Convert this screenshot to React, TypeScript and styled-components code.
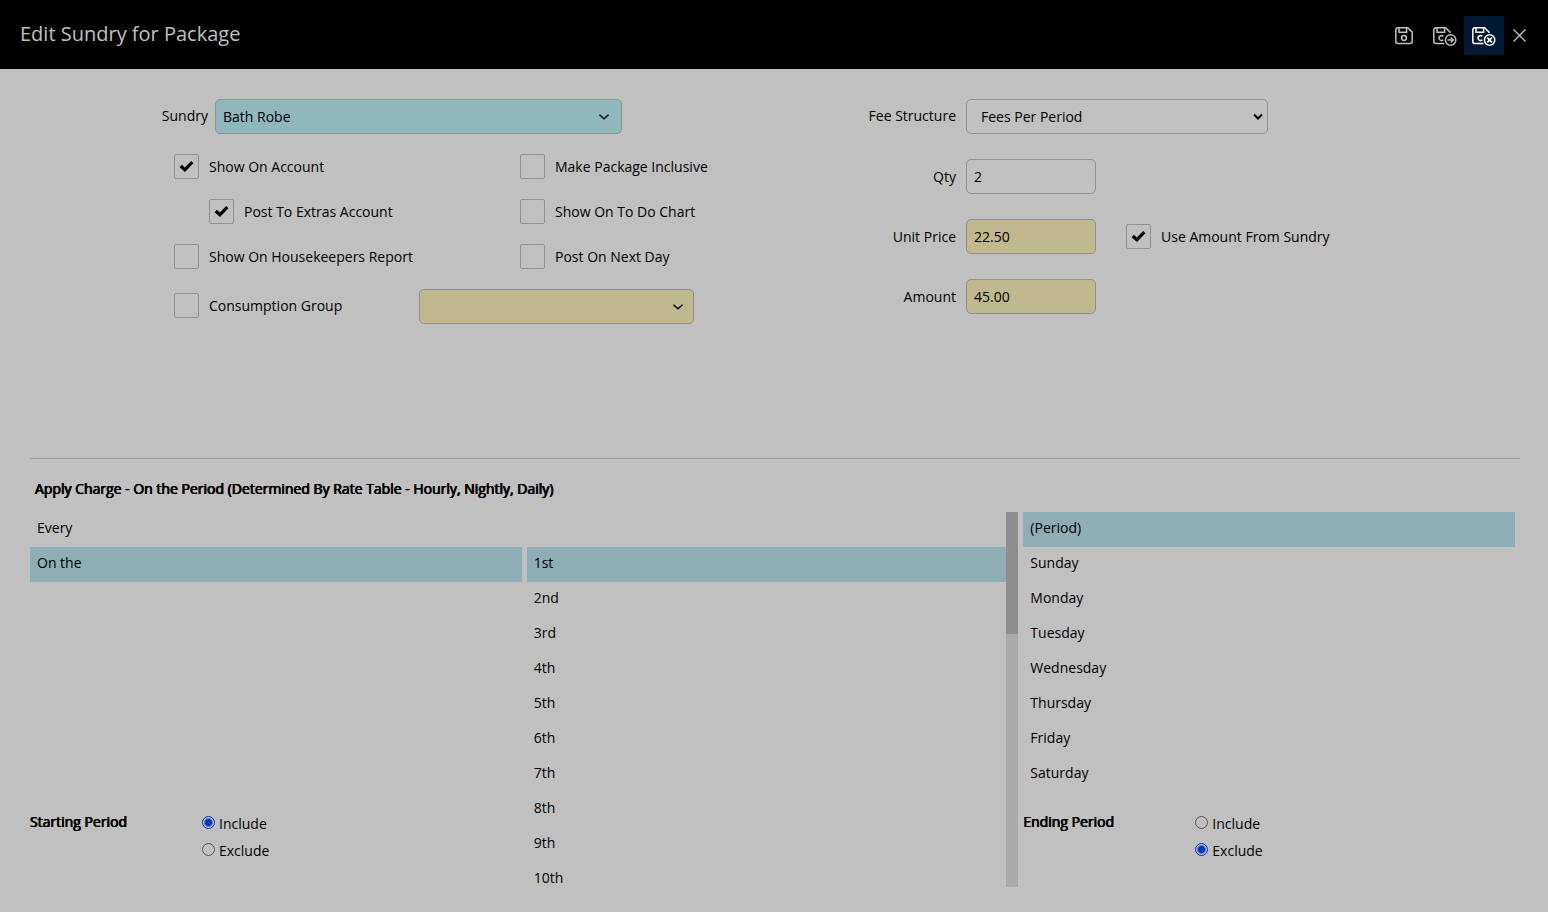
import React, { useState } from 'react';
import styled, { createGlobalStyle, css } from 'styled-components';

const color = {
  page: '#c0c0c0',
  ink: '#000000',
  border: '#909090',
  required: '#90b8bc',
  computed: '#bfb98d',
  selected: '#8eadb5',
  track: '#aaaaaa',
  thumb: '#8e8e8e',
  accent: '#0038c0',
};

const GlobalStyle = createGlobalStyle`
  *, *::before, *::after { box-sizing: border-box; }
  body {
    margin: 0;
    background: ${color.page};
    color: ${color.ink};
    font-family: 'Open Sans', 'Noto Sans', sans-serif;
    font-size: 14px;
    line-height: 20px;
  }
  input, select, button { font: inherit; color: inherit; }
`;

const Header = styled.header`
  display: flex;
  align-items: center;
  justify-content: space-between;
  height: 69px;
  padding: 2px 13px 0 20px;
  background: #000000;
  color: ${color.page};
`;

const Title = styled.h1`
  margin: 0;
  padding-bottom: 4px;
  font-size: 20px;
  font-weight: 400;
  line-height: 28px;
`;

const Toolbar = styled.div`
  display: flex;
`;

const ToolButton = styled.button<{ $active?: boolean; $narrow?: boolean }>`
  display: flex;
  align-items: center;
  justify-content: center;
  width: ${(p) => (p.$narrow ? 31 : 40)}px;
  height: 39px;
  padding: 0;
  border: 0;
  background: ${(p) => (p.$active ? '#001a35' : 'transparent')};
  color: ${(p) => (p.$active ? '#ffffff' : color.page)};
  cursor: pointer;
`;

const Main = styled.main`
  padding: 0 28px 25px 30px;
`;

const Details = styled.section`
  display: grid;
  grid-template-columns: 1fr 1fr;
  min-height: 390px;
  padding-top: 30px;
  border-bottom: 1px solid #9c9c9c;
`;

const LeftFields = styled.div`
  display: flex;
  flex-direction: column;
  gap: 20px;
`;

const RightFields = styled.div`
  display: flex;
  flex-direction: column;
  gap: 25px;
`;

const FieldRow = styled.div`
  display: flex;
  align-items: center;
`;

const FieldLabel = styled.label<{ $wide?: boolean; $forSelect?: boolean }>`
  width: ${(p) => (p.$wide ? 191 : 185)}px;
  padding-right: ${(p) => (p.$wide ? 10 : 7)}px;
  padding-bottom: ${(p) => (p.$forSelect ? 2 : 0)}px;
  text-align: right;
`;

const controlBox = css`
  height: 35px;
  border: 1px solid ${color.border};
  border-radius: 5px;
`;

const SelectWrap = styled.div<{ $width: number }>`
  display: grid;
  align-items: center;
  width: ${(p) => p.$width}px;
  > * { grid-area: 1 / 1; }
  > svg { justify-self: end; pointer-events: none; }
`;

const Select = styled.select<{ $fill?: string; $inset?: number }>`
  ${controlBox}
  width: 100%;
  padding: 0 30px 0 ${(p) => p.$inset ?? 7}px;
  appearance: none;
  background: ${(p) => p.$fill ?? 'transparent'};
`;

const TextInput = styled.input<{ $fill?: string }>`
  ${controlBox}
  width: 130px;
  padding: 0 7px;
  background: ${(p) => p.$fill ?? 'transparent'};
`;

const OptionRow = styled.div`
  display: grid;
  grid-template-columns: 346px 1fr;
  align-items: center;
  padding-left: 144px;
`;

const GroupRow = styled(OptionRow)`
  grid-template-columns: 245px 1fr;
  > label { padding-bottom: 2px; }
`;

const CheckLabel = styled.label<{ $indent?: number }>`
  display: flex;
  align-items: center;
  gap: 10px;
  padding-left: ${(p) => p.$indent ?? 0}px;
`;

const CheckBox = styled.span`
  display: grid;
  place-items: center;
  width: 25px;
  height: 25px;
  > * { grid-area: 1 / 1; }
  > svg { pointer-events: none; }
`;

const CheckInput = styled.input`
  width: 25px;
  height: 25px;
  margin: 0;
  appearance: none;
  border: 1px solid ${color.border};
  border-radius: 2px;
`;

const fauxBold = css`
  font-size: 14px;
  font-weight: 400;
  text-shadow: 0.03em 0 currentColor, -0.03em 0 currentColor;
`;

const SectionTitle = styled.h2`
  ${fauxBold}
  margin: 0;
  padding: 20px 5px 13px;
`;

const Pickers = styled.div`
  display: grid;
  grid-template-columns: repeat(3, minmax(0, 1fr));
  gap: 5px;
  padding-right: 5px;
`;

const PickList = styled.ul`
  flex: 1;
  min-height: 280px;
  margin: 0;
  padding: 0;
  list-style: none;
`;

const ScrollPane = styled.div`
  display: flex;
  height: 375px;
  overflow: hidden;
`;

const ScrollTrack = styled.div`
  width: 12px;
  background: ${color.track};
`;

const ScrollThumb = styled.div`
  background: ${color.thumb};
`;

const PickButton = styled.button<{ $selected?: boolean }>`
  display: block;
  width: 100%;
  height: 35px;
  padding: 0 7px 3px;
  border: 0;
  background: ${(p) => (p.$selected ? color.selected : 'transparent')};
  text-align: left;
`;

const PeriodGroup = styled.div`
  display: flex;
  padding-top: 20px;
`;

const PeriodName = styled.div`
  ${fauxBold}
  width: 172px;
`;

const Radios = styled.div`
  display: flex;
  flex-direction: column;
  gap: 7px;
  padding-top: 2px;
`;

const RadioLabel = styled.label`
  display: flex;
  gap: 4px;
`;

const RadioInput = styled.input`
  width: 13px;
  height: 13px;
  margin: 2px 0 0;
  appearance: none;
  border: 1px solid #585858;
  border-radius: 50%;
  &:checked {
    border-color: ${color.accent};
    background: radial-gradient(circle, ${color.accent} 3px, transparent 5px);
  }
`;

const Chevron = ({ bold, inset }: { bold?: boolean; inset: number }) => (
  <svg width={12 + inset} height="10" viewBox={`0 0 ${12 + inset} 10`} fill="none" stroke="#000" strokeWidth={bold ? 2 : 1.4}>
    {bold ? <path d="M2 2.5l4 4 4-4" /> : <path d="M1.5 2.8l4.5 4 4.5-4" />}
  </svg>
);

const Tick = () => (
  <svg width="15" height="13" viewBox="0 0 15 13">
    <path d="M0.6 7.2 2.9 4.8 5.8 7.4 12.2 1 14.4 3.2 6 12z" fill="#000" />
  </svg>
);

const SaveIcon = () => (
  <svg width="18" height="19" viewBox="0 -1 18 19" fill="none" stroke="currentColor" strokeWidth="1.5">
    <path d="M2.8 .8h10l4.4 4.3v9.5a2 2 0 0 1-2 2H2.8a2 2 0 0 1-2-2V2.8a2 2 0 0 1 2-2z" />
    <path d="M4 .8v4.4h7.6V.8" />
    <circle cx="9" cy="11" r="2.4" />
  </svg>
);

const SaveNextIcon = ({ mark }: { mark: 'arrow' | 'cross' }) => (
  <svg
    width={mark === 'arrow' ? 26 : 24}
    height="21"
    viewBox={mark === 'arrow' ? '-2 -1 26 21' : '0 -1 24 21'}
    fill="none"
    stroke="currentColor"
    strokeWidth="1.5"
  >
    <path d="M11.4 17.6H2.8a2 2 0 0 1-2-2V3.8a2 2 0 0 1 2-2h9.8l4.4 4.3v.9" />
    <path d="M4 1.8v4.4h7.6V1.8" />
    <path d="M10.4 10.4a2.6 2.4 0 1 0 0 3.4" />
    <circle cx="17.6" cy="14" r="5.2" />
    {mark === 'arrow' ? (
      <path d="M14.6 14h5.4M17.8 11.5l2.5 2.5-2.5 2.5" />
    ) : (
      <path d="M15.3 11.7l4.6 4.6M19.9 11.7l-4.6 4.6" strokeWidth="1.7" />
    )}
  </svg>
);

const CloseIcon = () => (
  <svg width="13" height="13" viewBox="0 0 13 13" fill="none" stroke="currentColor" strokeWidth="1.4">
    <path d="M.5 .5l12 12M12.5 .5l-12 12" />
  </svg>
);

function Check({ label, checked, indent }: { label: string; checked?: boolean; indent?: number }) {
  const [on, setOn] = useState(!!checked);
  return (
    <CheckLabel $indent={indent}>
      <CheckBox>
        <CheckInput type="checkbox" checked={on} onChange={() => setOn(!on)} />
        {on && <Tick />}
      </CheckBox>
      {label}
    </CheckLabel>
  );
}

type PickerProps = { items: string[]; initial: number; label: string; first?: number; count?: number };

function Picker({ items, initial, label, first = 0, count = items.length }: PickerProps) {
  const [current, setCurrent] = useState(initial);
  return (
    <PickList aria-label={label}>
      {items.slice(first, first + count).map((item, i) => (
        <li key={first + i}>
          <PickButton type="button" $selected={first + i === current} onClick={() => setCurrent(first + i)}>
            {item}
          </PickButton>
        </li>
      ))}
    </PickList>
  );
}

const VISIBLE_ROWS = 11;

// Renders only the rows in view; the wheel moves the window through the list.
function ScrollPicker(props: PickerProps) {
  const [first, setFirst] = useState(0);
  const last = props.items.length - VISIBLE_ROWS + 1;
  const thumb = (375 / (props.items.length * 35)) * 100;
  const onWheel = (e: React.WheelEvent) => {
    const step = Math.sign(e.deltaY);
    setFirst((n) => Math.max(0, Math.min(last, n + step)));
  };
  return (
    <ScrollPane onWheel={onWheel}>
      <Picker {...props} first={first} count={VISIBLE_ROWS} />
      <ScrollTrack>
        <ScrollThumb style={{ height: `${thumb}%`, marginTop: (first / last) * 375 * (1 - thumb / 100) }} />
      </ScrollTrack>
    </ScrollPane>
  );
}

function Period({ name, initial }: { name: string; initial: 'Include' | 'Exclude' }) {
  return (
    <PeriodGroup role="radiogroup" aria-label={name}>
      <PeriodName>{name}</PeriodName>
      <Radios>
        {['Include', 'Exclude'].map((choice) => (
          <RadioLabel key={choice}>
            <RadioInput type="radio" name={name} defaultChecked={choice === initial} />
            {choice}
          </RadioLabel>
        ))}
      </Radios>
    </PeriodGroup>
  );
}

const ordinal = (n: number) => {
  const teen = n > 10 && n < 14;
  const suffix = teen ? 'th' : ['th', 'st', 'nd', 'rd'][n % 10] ?? 'th';
  return `${n}${suffix}`;
};

const positions = ['', ...Array.from({ length: 31 }, (_, i) => ordinal(i + 1)), 'Last'];
const days = ['(Period)', 'Sunday', 'Monday', 'Tuesday', 'Wednesday', 'Thursday', 'Friday', 'Saturday'];

export default function App() {
  return (
    <>
      <GlobalStyle />
      <Header>
        <Title>Edit Sundry for Package</Title>
        <Toolbar>
          <ToolButton type="button" aria-label="Save"><SaveIcon /></ToolButton>
          <ToolButton type="button" aria-label="Save and continue"><SaveNextIcon mark="arrow" /></ToolButton>
          <ToolButton type="button" aria-label="Save and close" $active><SaveNextIcon mark="cross" /></ToolButton>
          <ToolButton type="button" aria-label="Close" $narrow><CloseIcon /></ToolButton>
        </Toolbar>
      </Header>
      <Main>
        <Details>
          <LeftFields>
            <FieldRow>
              <FieldLabel $forSelect htmlFor="sundry">Sundry</FieldLabel>
              <SelectWrap $width={407}>
                <Select id="sundry" $fill={color.required}><option>Bath Robe</option></Select>
                <Chevron inset={12} />
              </SelectWrap>
            </FieldRow>
            <OptionRow>
              <Check label="Show On Account" checked />
              <Check label="Make Package Inclusive" />
            </OptionRow>
            <OptionRow>
              <Check label="Post To Extras Account" checked indent={35} />
              <Check label="Show On To Do Chart" />
            </OptionRow>
            <OptionRow>
              <Check label="Show On Housekeepers Report" />
              <Check label="Post On Next Day" />
            </OptionRow>
            <GroupRow>
              <Check label="Consumption Group" />
              <SelectWrap $width={275}>
                <Select aria-label="Consumption group" $fill={color.computed}><option></option></Select>
                <Chevron inset={10} />
              </SelectWrap>
            </GroupRow>
          </LeftFields>
          <RightFields>
            <FieldRow>
              <FieldLabel $wide $forSelect htmlFor="fee">Fee Structure</FieldLabel>
              <SelectWrap $width={302}>
                <Select id="fee" $inset={14}><option>Fees Per Period</option></Select>
                <Chevron bold inset={4} />
              </SelectWrap>
            </FieldRow>
            <FieldRow>
              <FieldLabel $wide htmlFor="qty">Qty</FieldLabel>
              <TextInput id="qty" defaultValue="2" />
            </FieldRow>
            <FieldRow>
              <FieldLabel $wide htmlFor="price">Unit Price</FieldLabel>
              <TextInput id="price" defaultValue="22.50" $fill={color.computed} />
              <Check label="Use Amount From Sundry" checked indent={30} />
            </FieldRow>
            <FieldRow>
              <FieldLabel $wide htmlFor="amount">Amount</FieldLabel>
              <TextInput id="amount" defaultValue="45.00" $fill={color.computed} />
            </FieldRow>
          </RightFields>
        </Details>
        <SectionTitle>Apply Charge - On the Period (Determined By Rate Table - Hourly, Nightly, Daily)</SectionTitle>
        <Pickers>
          <div>
            <Picker label="Frequency" items={['Every', 'On the']} initial={1} />
            <Period name="Starting Period" initial="Include" />
          </div>
          <ScrollPicker label="Position" items={positions} initial={1} />
          <div>
            <Picker label="Day" items={days} initial={0} />
            <Period name="Ending Period" initial="Exclude" />
          </div>
        </Pickers>
      </Main>
    </>
  );
}
